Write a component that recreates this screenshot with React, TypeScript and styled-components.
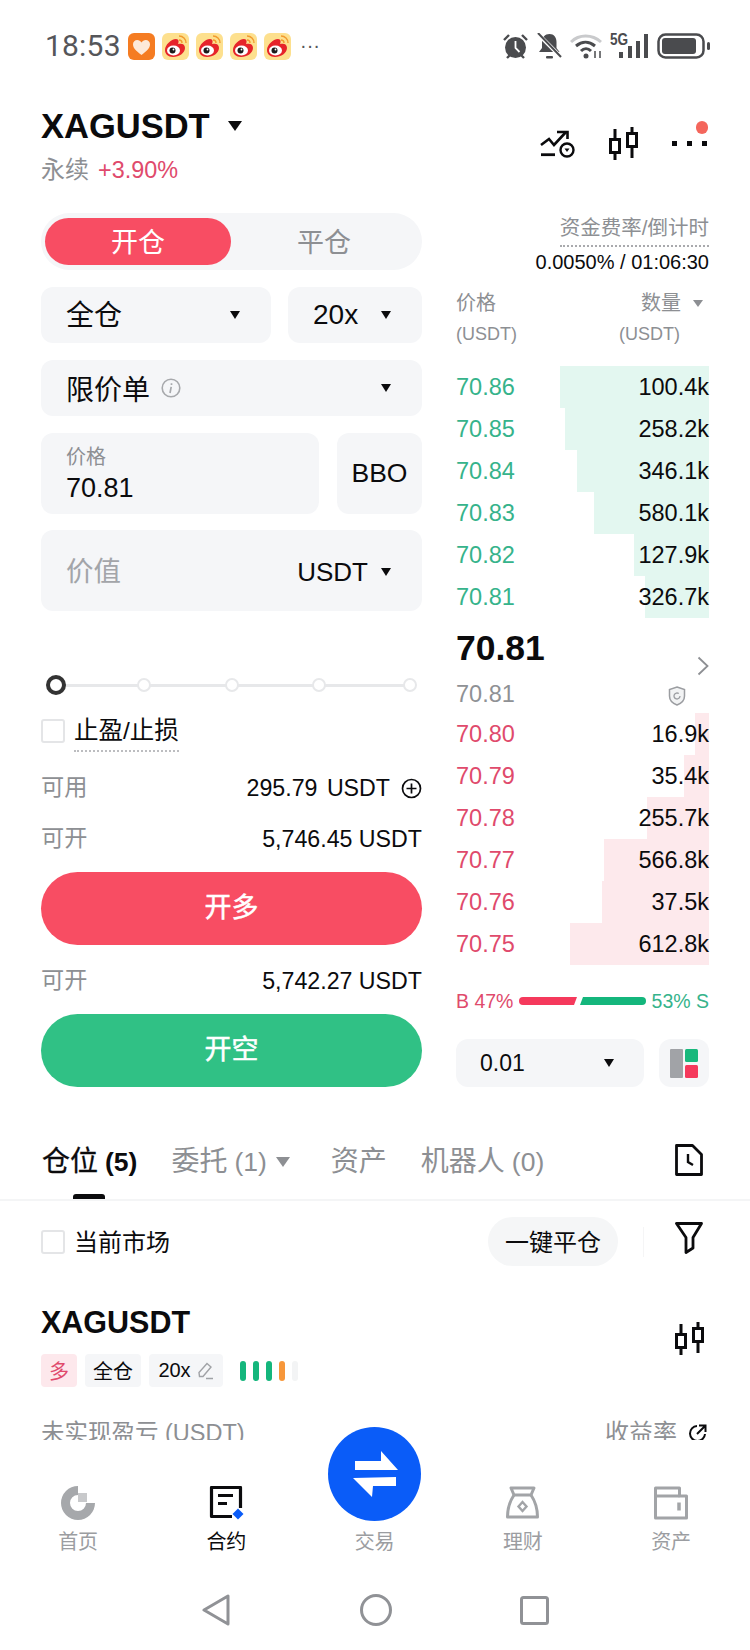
import React from "react";
import styled, { createGlobalStyle } from "styled-components";

const Global = createGlobalStyle`
  html, body { margin: 0; padding: 0; background: #fff; }
  body { font-family: "Liberation Sans", "Noto Sans CJK SC", sans-serif; color: #0b0b0d; }
  * { box-sizing: border-box; }
  svg { display: block; flex: none; }
`;

const RED = "#f84d63";
const GREEN = "#30c185";
const PANEL = "#f5f6f8";
const GRAY = "#8d8f93";
const PRICE_RED = "#e04a6c";
const PRICE_GREEN = "#36b38b";

const Screen = styled.div`
  width: 750px; height: 1650px; overflow: hidden; display: flex; flex-direction: column; background: #fff;
`;
const Content = styled.div`
  height: 1440px; overflow: hidden; flex: none;
`;

const StatusBar = styled.div`
  height: 92px; padding: 0 40px 0 45px; display: flex; align-items: center;
`;
const Clock = styled.span`
  font: 400 30px/1 Roboto, "Liberation Sans", sans-serif; color: #55565a; width: 74px; margin-right: 9px; letter-spacing: .2px;
`;
const AppIcons = styled.div`
  display: flex; gap: 7px; align-items: center;
`;
const MoreDots = styled.span`
  margin-left: 2px; font-size: 20px; line-height: 20px; height: 20px; color: #55565a; margin-bottom: 2px;
`;
const SysIcons = styled.div`
  margin-left: auto; display: flex; align-items: center;
`;
const SignalBox = styled.div`
  position: relative; width: 38px; height: 24px; margin: 0 9px 0 7px;
`;
const FiveG = styled.span`
  position: absolute; left: 0; top: -2px; font: 700 16px/1 "Liberation Sans", sans-serif; color: #4a4b4e; transform: scaleX(.85); transform-origin: left top;
`;

const Header = styled.div`
  padding: 0 42px 0 41px; display: flex; justify-content: space-between;
`;
const TitleRow = styled.div`
  height: 68px; display: flex; align-items: center; gap: 18px;
`;
const Title = styled.span`
  font-size: 34.5px; font-weight: 700; line-height: 1;
`;
const SubRow = styled.div`
  height: 24px; margin-top: -2px; display: flex; align-items: center; gap: 9px; font-size: 23.4px; line-height: 24px;
`;
const SubLabel = styled.span`
  color: ${GRAY}; font-size: 24px;
`;
const SubValue = styled.span`
  color: ${PRICE_RED};
`;
const HeaderIcons = styled.div`
  position: relative; display: flex; margin-top: 35px; height: 34px; align-items: flex-start;
`;
const IconGap = styled.span`
  width: 33px;
`;
const MenuDots = styled.div`
  width: 36px; height: 34px; margin-left: 33px; position: relative;
`;
const Notice = styled.span`
  position: absolute; right: 0; top: -6px; width: 12.500px; height: 12.500px; border-radius: 50%; background: #f4665c;
`;

const Triangle = styled.span<{ $w?: number; $h?: number; $c?: string }>`
  display: inline-block; flex: none; width: 0; height: 0;
  border-left: ${p => (p.$w ?? 10) / 2}px solid transparent;
  border-right: ${p => (p.$w ?? 10) / 2}px solid transparent;
  border-top: ${p => p.$h ?? 8}px solid ${p => p.$c ?? "#0b0b0d"};
`;

const Trade = styled.div`
  margin-top: 31px; padding: 0 40px 0 41px; display: flex; gap: 34px;
`;
const Left = styled.div`
  width: 381px; flex: none; display: flex; flex-direction: column;
`;
const Right = styled.div`
  width: 254px; flex: none; display: flex; flex-direction: column; padding-right: 1px;
`;

const Toggle = styled.div`
  height: 57px; background: ${PANEL}; border-radius: 29px; padding: 5px 4px; display: flex;
`;
const ToggleItem = styled.div<{ $on?: boolean }>`
  width: 186px; height: 47px; border-radius: 24px; display: flex; align-items: center; justify-content: center; font-size: 27px; padding-bottom: 2px;
  background: ${p => (p.$on ? RED : "transparent")}; color: ${p => (p.$on ? "#fff" : GRAY)};
`;
const FieldRow = styled.div<{ $gap?: number }>`
  display: flex; gap: ${p => p.$gap ?? 17}px; margin-top: 16.5px;
`;
const Field = styled.div<{ $w?: number; $h?: number }>`
  ${p => (p.$w ? `width:${p.$w}px;flex:none;` : "flex:1;")}
  height: ${p => p.$h ?? 56.5}px; background: ${PANEL}; border-radius: 12px; padding: 0 31px 0 25px; display: flex; align-items: center; justify-content: space-between;
  font-size: 28px;
`;
const CjkLabel = styled.span`
  margin-bottom: 3px;
`;
const LatinLabel = styled.span`
  margin-top: 1px;
`;
const CenterField = styled(Field)`
  padding: 0; justify-content: center; font-size: 26.5px;
`;
const NoGrow = styled.span`
  display: flex; align-items: center; gap: 11px;
`;
const PriceField = styled(Field)`
  flex-direction: column; align-items: flex-start; justify-content: flex-start; padding-top: 12px;
`;
const SmallLabel = styled.span`
  font-size: 20px; line-height: 24px; color: ${GRAY};
`;
const BigVal = styled.span`
  font-size: 27px; line-height: 32px; margin-top: 3px;
`;
const Placeholder = styled.span`
  color: #a3a5a9; font-size: 27.500px; margin-bottom: 3px;
`;
const UnitPick = styled.span`
  display: flex; align-items: center; gap: 13px; font-size: 26px; margin-top: 3px;
`;

const Slider = styled.div`
  position: relative; height: 20px; margin: 64px 0 0 5px; width: 372px; display: flex; align-items: center;
`;
const Track = styled.div`
  position: absolute; left: 10px; right: 7px; top: 9px; height: 3px; background: #e7e8ea;
`;
const Knob = styled.div`
  position: relative; width: 20px; height: 20px; border-radius: 50%; border: 4px solid #333; background: #fff;
`;
const Dot = styled.div<{ $ml: number }>`
  position: relative; width: 14px; height: 14px; border-radius: 50%; border: 2px solid #e7e8ea; background: #fff; margin-left: ${p => p.$ml}px;
`;

const TpRow = styled.div`
  display: flex; gap: 9px; margin-top: 24px; height: 33px;
`;
const Check = styled.span`
  width: 24px; height: 24px; flex: none; border: 2px solid #e4e5e7; border-radius: 3px; background: #fff;
`;
const TpLabel = styled.span`
  font-size: 24.500px; line-height: 24px; height: 33px; padding-bottom: 7px; border-bottom: 2px dotted #bcbdc0;
`;
const InfoRow = styled.div<{ $mt: number }>`
  height: 30px; margin-top: ${p => p.$mt}px; display: flex; align-items: center; justify-content: space-between; font-size: 23.200px;
`;
const InfoKey = styled.span`
  color: ${GRAY}; margin-bottom: 5px;
`;
const InfoVal = styled.span<{ $wide?: boolean }>`
  display: flex; align-items: center; gap: 11px; white-space: pre; margin-top: 2px; ${p => p.$wide && "word-spacing: 3px;"}
`;
const Action = styled.div<{ $c: string; $mt: number }>`
  height: 73px; margin-top: ${p => p.$mt}px; border-radius: 37px; background: ${p => p.$c}; color: #fff; display: flex; align-items: center; justify-content: center; font-size: 27px; padding-bottom: 6px;
  -webkit-text-stroke: .5px #fff;
`;

const FundBlock = styled.div`
  display: flex; flex-direction: column; align-items: flex-end;
`;
const FundLabel = styled.span`
  font-size: 20.5px; line-height: 28px; margin-top: 1px; padding-bottom: 3px; border-bottom: 2px dotted #a9aaad; color: ${GRAY};
  white-space: nowrap;
`;
const FundVal = styled.span`
  font-size: 20px; line-height: 24px; margin-top: 3px; white-space: pre;
`;
const BookHead = styled.div`
  margin-top: 14px; height: 58px; display: grid; grid-template-columns: 1fr 1fr; color: ${GRAY};
`;
const HeadCell = styled.span<{ $right?: boolean; $small?: boolean }>`
  font-size: ${p => (p.$small ? 18 : 20)}px; line-height: ${p => (p.$small ? 24 : 30)}px; ${p => p.$small && "margin-top:4px;"}
  display: flex; align-items: center; gap: 12px;
  ${p => p.$right && "justify-self:end;padding-right:6px;"}
`;
const HeadCellEnd = styled.span`
  font-size: 18px; line-height: 24px; margin-top: 4px; padding-right: 29px; text-align: right;
`;
const Asks = styled.div`
  margin-top: 20px;
`;
const Row = styled.div`
  position: relative; height: 42px; display: flex; align-items: center; justify-content: space-between; font-size: 23.5px;
`;
const Depth = styled.span<{ $c: string }>`
  position: absolute; top: 0; bottom: 0; right: 0; background: ${p => p.$c};
`;
const RowPrice = styled.span<{ $c: string }>`
  position: relative; color: ${p => p.$c};
`;
const RowQty = styled.span`
  position: relative;
`;
const Mid = styled.div`
  height: 95px; display: flex; flex-direction: column;
`;
const MidTop = styled.div`
  height: 60px; display: flex; justify-content: space-between;
`;
const MidPrice = styled.span`
  font-size: 35.500px; font-weight: 700; line-height: 60px;
`;
const ChevronWrap = styled.span`
  margin: 38px 0 0 0;
`;
const MidBottom = styled.div`
  height: 32px; display: flex; justify-content: space-between; align-items: center; color: #8f9195; font-size: 23.5px;
`;
const ShieldWrap = styled.span`
  margin-right: 23px; margin-top: 4px;
`;
const Ratio = styled.div`
  margin-top: 25px; height: 22px; display: flex; align-items: center; font-size: 19.5px; justify-content: space-between;
`;
const RatioText = styled.span<{ $c: string }>`
  color: ${p => p.$c}; white-space: pre;
`;
const RatioBars = styled.span`
  display: flex; gap: 3px;
`;
const RatioBar = styled.span<{ $w: number; $c: string; $side: "l" | "r" }>`
  width: ${p => p.$w}px; height: 8px; background: ${p => p.$c};
  ${p => p.$side === "l"
    ? "border-radius:4px 0 0 4px;clip-path:polygon(0 0,100% 0,calc(100% - 3px) 100%,0 100%);"
    : "border-radius:0 4px 4px 0;clip-path:polygon(3px 0,100% 0,100% 100%,0 100%);"}
`;
const BookFoot = styled.div`
  margin-top: 27px; display: flex; justify-content: space-between;
`;
const StepBox = styled.div`
  width: 188px; height: 48px; background: ${PANEL}; border-radius: 12px; padding: 0 30px 0 24px; display: flex; align-items: center; justify-content: space-between; font-size: 23px;
`;
const LayoutBox = styled.div`
  width: 50px; height: 48px; background: ${PANEL}; border-radius: 12px; display: flex; align-items: center; justify-content: center;
`;

const Tabs = styled.div`
  margin-top: 43px; height: 71px; border-bottom: 2px solid #f4f5f6; padding: 15px 47px 0 42px; display: flex; position: relative;
`;
const Tab = styled.span<{ $on?: boolean; $ml: number }>`
  margin-left: ${p => p.$ml}px; height: 34px; display: flex; align-items: center; font-size: 28px; line-height: 34px; gap: 7px; color: ${p => (p.$on ? "#0b0b0d" : GRAY)};
  ${p => p.$on && "-webkit-text-stroke: .3px #0b0b0d;"}
`;
const TabCount = styled.span<{ $on?: boolean }>`
  font-size: 26.500px; font-weight: ${p => (p.$on ? 700 : 400)}; -webkit-text-stroke: 0;
`;
const TabLine = styled.span`
  position: absolute; left: 73px; bottom: 0; width: 32px; height: 5px; background: #0b0b0d; border-radius: 3px 3px 0 0;
`;
const TabIcon = styled.span`
  margin-left: auto; margin-top: -1px;
`;
const TabTri = styled.span`
  margin-left: 2px; display: flex;
`;
const FilterRow = styled.div`
  margin-top: 16px; height: 49px; padding: 0 47px 0 41px; display: flex; align-items: center;
`;
const FilterLabel = styled.span`
  font-size: 24px; margin-left: 9px; margin-bottom: 2px;
`;
const CloseAll = styled.span`
  margin-left: auto; width: 130px; height: 49px; border-radius: 25px; background: #f5f6f7; display: flex; align-items: center; justify-content: center; font-size: 24px; padding-bottom: 2px;
`;
const VBar = styled.span`
  width: 1px; height: 30px; background: #f5f5f6; margin: 0 31px 0 25px;
`;
const FilterIconWrap = styled.span`
  margin-bottom: 7px;
`;
const PosHead = styled.div`
  margin-top: 38px; padding: 0 45px 0 41px; display: flex; justify-content: space-between;
`;
const PosName = styled.div`
  font-size: 30.500px; font-weight: 700; line-height: 36px;
`;
const Tags = styled.div`
  margin-top: 14px; display: flex; align-items: center; gap: 8px;
`;
const Tag = styled.span<{ $w: number; $pink?: boolean }>`
  width: ${p => p.$w}px; height: 33px; border-radius: 4px; display: flex; align-items: center; justify-content: center; gap: 6px; font-size: 20px;
  background: ${p => (p.$pink ? "#fde8ec" : PANEL)}; color: ${p => (p.$pink ? PRICE_RED : "#0b0b0d")};
`;
const Lights = styled.span`
  margin-left: 9px; display: flex; gap: 7px;
`;
const Light = styled.span<{ $c: string }>`
  width: 6px; height: 20px; border-radius: 3px; background: ${p => p.$c};
`;
const CandleWrap = styled.span`
  margin-top: 18px;
`;
const PnlRow = styled.div`
  margin-top: 32px; height: 28px; padding: 0 42px 0 41px; display: flex; justify-content: space-between; align-items: center; font-size: 23.5px; color: ${GRAY}; line-height: 28px;
`;
const PnlRight = styled.span`
  display: flex; align-items: center; gap: 11px; font-size: 24px;
`;

const Nav = styled.div`
  position: relative; height: 130px; flex: none; background: #fff; display: grid; grid-template-columns: repeat(5, 148.25px); padding: 46px 0 0 4px;
`;
const NavItem = styled.div<{ $on?: boolean }>`
  display: flex; flex-direction: column; align-items: center; color: ${p => (p.$on ? "#0b0b0d" : "#9b9da1")}; font-size: 20px;
`;
const NavIcon = styled.span`
  height: 34px; width: 36px; display: flex; justify-content: center;
`;
const NavLabel = styled.span`
  margin-top: 7px; line-height: 30px;
`;
const Fab = styled.div`
  position: absolute; left: 328px; top: -13px; width: 93px; height: 94px; border-radius: 50%; background: #0a5cf8; display: flex; align-items: center; justify-content: center;
`;
const SysNav = styled.div`
  flex: 1; display: flex; align-items: center;
`;
const SysSlot = styled.span<{ $ml: number }>`
  margin-left: ${p => p.$ml}px;
`;

const Weibo = () => (
  <svg width="27" height="27" viewBox="0 0 27 27">
    <rect width="27" height="27" rx="6" fill="#fde08e" />
    <path d="M3 17c0-5 6-11 11-11 3 0 3 3 2 5 4-1 7 0 7 4 0 5-6 9-12 9-5 0-8-3-8-7z" fill="#e6242a" />
    <ellipse cx="11.5" cy="17.5" rx="6.5" ry="5" fill="#fff" />
    <circle cx="10.5" cy="17.5" r="3" fill="#1b1b1b" />
    <circle cx="11.5" cy="16.5" r=".9" fill="#fff" />
    <path d="M17 3c4 0 7 3 7 7M17 7c2 0 3 1 3 3" stroke="#f29a2e" strokeWidth="1.4" fill="none" />
  </svg>
);
const Heart = () => (
  <svg width="27" height="27" viewBox="0 0 27 27">
    <rect width="27" height="27" rx="6" fill="#f57c22" />
    <path d="M13.5 22C8 18 5 15 5 11.3 5 8.7 7 7 9.2 7c1.8 0 3.3 1 4.3 2.5C14.5 8 16 7 17.8 7 20 7 22 8.7 22 11.3 22 15 19 18 13.5 22z" fill="#fde9d8" />
  </svg>
);
const Alarm = () => (
  <svg width="27" height="27" viewBox="0 0 27 27" style={{ marginRight: 8 }}>
    <circle cx="13.5" cy="14.5" r="10.5" fill="#4a4b4e" />
    <path d="M2 7l5-5M25 7l-5-5M5 25l3-3M22 25l-3-3" stroke="#4a4b4e" strokeWidth="2.4" />
    <path d="M13.5 8v7l4 4" stroke="#fff" strokeWidth="1.8" fill="none" />
  </svg>
);
const Bell = () => (
  <svg width="25" height="27" viewBox="0 0 25 27" style={{ marginRight: 8 }}>
    <path d="M12.5 1c4.5 0 7 3.5 7 8v6l3 4H2l3-4V9c0-4.500 3-8 7.500-8z" fill="#4a4b4e" />
    <rect x="9" y="23" width="7" height="2.500" rx="1" fill="#4a4b4e" />
    <path d="M1 1l23 23" stroke="#fff" strokeWidth="4" />
    <path d="M1 0l23 24" stroke="#4a4b4e" strokeWidth="2" />
  </svg>
);
const Wifi = () => (
  <svg width="33" height="26" viewBox="0 0 33 26">
    <path d="M1 9C9 1 22 1 31 9" stroke="#c9cacc" strokeWidth="3" fill="none" />
    <path d="M6 13c6-5 13-5 19 0M11 18c3-3 7-3 10 0" stroke="#4a4b4e" strokeWidth="3" fill="none" />
    <circle cx="16" cy="23" r="2.500" fill="#4a4b4e" />
    <path d="M25 18v7M30 18v7" stroke="#4a4b4e" strokeWidth="1.500" />
  </svg>
);
const Signal = () => (
  <svg width="38" height="24" viewBox="0 0 38 24">
    <rect x="9" y="18" width="4" height="6" fill="#4a4b4e" />
    <rect x="18" y="12" width="4" height="12" fill="#4a4b4e" />
    <rect x="26" y="7" width="4" height="17" fill="#4a4b4e" />
    <rect x="34" y="0" width="4" height="24" fill="#4a4b4e" />
  </svg>
);
const Battery = () => (
  <svg width="53" height="26" viewBox="0 0 53 26">
    <rect x="1.500" y="1.500" width="45" height="23" rx="7" fill="none" stroke="#4a4b4e" strokeWidth="2.500" />
    <rect x="5" y="5" width="34" height="16" rx="3" fill="#4a4b4e" />
    <rect x="50" y="9" width="3" height="8" rx="1.500" fill="#4a4b4e" />
  </svg>
);

const RouteIcon = () => (
  <svg width="36" height="28" viewBox="0 0 36 28" style={{ marginTop: 3 }}>
    <path d="M1 15l8-6 5 6L26 2" fill="none" stroke="#0b0b0d" strokeWidth="2.600" />
    <path d="M17 2h10.500v7" fill="none" stroke="#0b0b0d" strokeWidth="2.600" />
    <path d="M1 24.700h14" stroke="#0b0b0d" strokeWidth="2.800" />
    <circle cx="27" cy="20" r="6.500" fill="#fff" stroke="#0b0b0d" strokeWidth="2.400" />
    <path d="M24.500 18.500h5L27 22z" fill="#0b0b0d" />
  </svg>
);
const Candle = () => (
  <svg width="30" height="34" viewBox="0 0 30 34">
    <path d="M6 2v31M23 0v31" stroke="#0b0b0d" strokeWidth="3" />
    <rect x="1.500" y="12.500" width="9" height="13" fill="#fff" stroke="#0b0b0d" strokeWidth="3" />
    <rect x="18.500" y="6.500" width="9" height="13" fill="#fff" stroke="#0b0b0d" strokeWidth="3" />
  </svg>
);
const Dots3 = () => (
  <svg width="36" height="34" viewBox="0 0 36 34">
    <rect x="0" y="14" width="5" height="5" fill="#0b0b0d" />
    <rect x="15" y="14" width="5" height="5" fill="#0b0b0d" />
    <rect x="30" y="14" width="5" height="5" fill="#0b0b0d" />
  </svg>
);
const Info = () => (
  <svg width="20" height="20" viewBox="0 0 20 20">
    <circle cx="10" cy="10" r="8.800" fill="none" stroke="#a7a9ac" strokeWidth="1.600" />
    <path d="M10.500 5.200v1.800M10.200 8.800L9 15" stroke="#a7a9ac" strokeWidth="1.700" fill="none" />
  </svg>
);
const PlusCircle = () => (
  <svg width="21" height="21" viewBox="0 0 21 21">
    <circle cx="10.500" cy="10.500" r="9" fill="none" stroke="#0b0b0d" strokeWidth="1.700" />
    <path d="M10.500 5.500v10M5.500 10.500h10" stroke="#0b0b0d" strokeWidth="1.700" />
  </svg>
);
const Chevron = () => (
  <svg width="12" height="20" viewBox="0 0 12 20">
    <path d="M1.500 1.500L10.500 10l-9 8.500" fill="none" stroke="#8d8f93" strokeWidth="1.800" />
  </svg>
);
const Shield = () => (
  <svg width="18" height="20" viewBox="0 0 18 20">
    <path d="M9 1l7.500 2.500V10c0 4.500-3.500 7.500-7.500 9-4-1.500-7.500-4.500-7.500-9V3.500z" fill="#f2f3f4" stroke="#9b9da1" strokeWidth="1.500" />
    <path d="M12 10a3 3 0 1 1-1.200-2.400" fill="none" stroke="#9b9da1" strokeWidth="1.300" />
  </svg>
);
const LayoutGlyph = () => (
  <svg width="28" height="29" viewBox="0 0 28 29">
    <rect x="0" y="0" width="13" height="29" rx="1" fill="#a1a3a7" />
    <rect x="15" y="0" width="13" height="13" rx="1.500" fill="#18b87c" />
    <rect x="15" y="16" width="13" height="13" rx="1.500" fill="#f5395c" />
  </svg>
);
const DocClock = () => (
  <svg width="28" height="32" viewBox="0 0 28 32">
    <path d="M1.500 1.500h16l9 9v20h-25z" fill="none" stroke="#0b0b0d" strokeWidth="2.800" strokeLinejoin="round" />
    <path d="M13 10v8l5 3" fill="none" stroke="#0b0b0d" strokeWidth="2.400" />
  </svg>
);
const Filter = () => (
  <svg width="28" height="32" viewBox="0 0 28 32">
    <path d="M1.500 1.500h25L18 15.500V26l-7 4.500V15.500z" fill="none" stroke="#0b0b0d" strokeWidth="2.800" strokeLinejoin="round" />
  </svg>
);
const Pencil = () => (
  <svg width="17" height="18" viewBox="0 0 17 18">
    <path d="M10 1.500l4 3.500-8 9.500H2.500L2 10.500zM9 16.500h7" fill="none" stroke="#a0a2a6" strokeWidth="1.400" />
  </svg>
);
const Share = () => (
  <svg width="20" height="20" viewBox="0 0 20 20">
    <path d="M9 3a7.500 7.500 0 1 0 8 8" fill="none" stroke="#0b0b0d" strokeWidth="2" />
    <path d="M9 11l8-8M11 2.500h6.500V9" fill="none" stroke="#0b0b0d" strokeWidth="2" />
  </svg>
);
const HomeIcon = () => (
  <svg width="34" height="34" viewBox="0 0 34 34">
    <path d="M17 0A17 17 0 1 0 34 17H25A8 8 0 1 1 17 9Z" fill="#a6a8ab" />
    <rect x="17" y="7" width="9" height="9" fill="#c8c9cb" />
  </svg>
);
const ContractIcon = () => (
  <svg width="36" height="34" viewBox="0 0 36 34">
    <path d="M32.500 22V1.500H3.500V30.500H24" fill="none" stroke="#0b0b0d" strokeWidth="3.200" strokeLinejoin="round" />
    <path d="M10 9.500H25M10 17.500H19" stroke="#0b0b0d" strokeWidth="3.200" />
    <path d="M30 22.500l5.500 5.500-5.500 5.500-5.500-5.500z" fill="#0a5cf8" />
  </svg>
);
const SwapIcon = () => (
  <svg width="46" height="48" viewBox="0 0 46 48">
    <path d="M3 11h26V1l17 19H3z" fill="#fff" />
    <path d="M44 27v9H21l-1 11L1 28z" fill="#fff" />
  </svg>
);
const BagIcon = () => (
  <svg width="33" height="34" viewBox="0 0 33 34">
    <path d="M5 2h23l-3 7H8z" fill="none" stroke="#a2a4a7" strokeWidth="3" strokeLinejoin="round" />
    <path d="M8 9C4 15 1.500 23 1.500 31H31.500C31.500 23 29 15 25 9" fill="none" stroke="#a2a4a7" strokeWidth="3" strokeLinejoin="round" />
    <path d="M16.500 16l4 4.500-4 4.500-4-4.500z" fill="none" stroke="#a2a4a7" strokeWidth="2.400" />
  </svg>
);
const WalletIcon = () => (
  <svg width="34" height="34" viewBox="0 0 34 34">
    <path d="M1.500 2H25.500V10H32.500V32H1.500Z" fill="none" stroke="#a2a4a7" strokeWidth="3" strokeLinejoin="round" />
    <path d="M1.500 10H25.500" stroke="#a2a4a7" strokeWidth="3" />
    <path d="M25 16.500v8" stroke="#a2a4a7" strokeWidth="3.500" />
  </svg>
);
const BackIcon = () => (
  <svg width="28" height="32" viewBox="0 0 28 32">
    <path d="M26 2v28L2 16z" fill="none" stroke="#909296" strokeWidth="3" strokeLinejoin="round" />
  </svg>
);
const HomeSys = () => (
  <svg width="32" height="32" viewBox="0 0 32 32">
    <circle cx="16" cy="16" r="14.500" fill="none" stroke="#909296" strokeWidth="3" />
  </svg>
);
const RecentSys = () => (
  <svg width="29" height="29" viewBox="0 0 29 29">
    <rect x="1.500" y="1.500" width="26" height="26" rx="2" fill="none" stroke="#909296" strokeWidth="3" />
  </svg>
);

const asks = [
  { p: "70.86", q: "100.4k", l: 560 }, { p: "70.85", q: "258.2k", l: 565 }, { p: "70.84", q: "346.1k", l: 577 },
  { p: "70.83", q: "580.1k", l: 594 }, { p: "70.82", q: "127.9k", l: 634 }, { p: "70.81", q: "326.7k", l: 645 },
];
const bids = [
  { p: "70.80", q: "16.9k", l: 695 }, { p: "70.79", q: "35.4k", l: 684 }, { p: "70.78", q: "255.7k", l: 647 },
  { p: "70.77", q: "566.8k", l: 604 }, { p: "70.76", q: "37.5k", l: 602 }, { p: "70.75", q: "612.8k", l: 570 },
];
const BOOK_RIGHT = 709;

export default function App() {
  return (
    <Screen>
      <Global />
      <Content>
        <StatusBar>
          <Clock>18:53</Clock>
          <AppIcons>
            <Heart /><Weibo /><Weibo /><Weibo /><Weibo />
            <MoreDots>···</MoreDots>
          </AppIcons>
          <SysIcons>
            <Alarm /><Bell /><Wifi />
            <SignalBox><FiveG>5G</FiveG><Signal /></SignalBox>
            <Battery />
          </SysIcons>
        </StatusBar>

        <Header>
          <div>
            <TitleRow><Title>XAGUSDT</Title><Triangle $w={14} $h={10} /></TitleRow>
            <SubRow><SubLabel>永续</SubLabel><SubValue>+3.90%</SubValue></SubRow>
          </div>
          <HeaderIcons>
            <RouteIcon />
            <IconGap />
            <Candle />
            <MenuDots><Dots3 /><Notice /></MenuDots>
          </HeaderIcons>
        </Header>

        <Trade>
          <Left>
            <Toggle>
              <ToggleItem $on>开仓</ToggleItem>
              <ToggleItem>平仓</ToggleItem>
            </Toggle>
            <FieldRow>
              <Field $w={230}><CjkLabel>全仓</CjkLabel><Triangle /></Field>
              <Field $w={134}><LatinLabel>20x</LatinLabel><Triangle /></Field>
            </FieldRow>
            <FieldRow>
              <Field><NoGrow>限价单<Info /></NoGrow><Triangle /></Field>
            </FieldRow>
            <FieldRow $gap={18}>
              <PriceField $w={278} $h={81}>
                <SmallLabel>价格</SmallLabel>
                <BigVal>70.81</BigVal>
              </PriceField>
              <CenterField $w={85} $h={81}>BBO</CenterField>
            </FieldRow>
            <FieldRow>
              <Field $h={81}><Placeholder>价值</Placeholder><UnitPick>USDT<Triangle /></UnitPick></Field>
            </FieldRow>

            <Slider>
              <Track />
              <Knob />
              <Dot $ml={71} />
              <Dot $ml={74} />
              <Dot $ml={73} />
              <Dot $ml={77} />
            </Slider>

            <TpRow>
              <Check />
              <TpLabel>止盈/止损</TpLabel>
            </TpRow>

            <InfoRow $mt={20}>
              <InfoKey>可用</InfoKey>
              <InfoVal $wide>295.79 USDT<PlusCircle /></InfoVal>
            </InfoRow>
            <InfoRow $mt={21}>
              <InfoKey>可开</InfoKey>
              <InfoVal>5,746.45 USDT</InfoVal>
            </InfoRow>
            <Action $c={RED} $mt={19}>开多</Action>
            <InfoRow $mt={20}>
              <InfoKey>可开</InfoKey>
              <InfoVal>5,742.27 USDT</InfoVal>
            </InfoRow>
            <Action $c={GREEN} $mt={19}>开空</Action>
          </Left>

          <Right>
            <FundBlock>
              <FundLabel>资金费率/倒计时</FundLabel>
              <FundVal>0.0050% / 01:06:30</FundVal>
            </FundBlock>
            <BookHead>
              <HeadCell>价格</HeadCell>
              <HeadCell $right>数量<Triangle $w={11} $h={7} $c="#8d8f93" /></HeadCell>
              <HeadCell $small>(USDT)</HeadCell>
              <HeadCellEnd>(USDT)</HeadCellEnd>
            </BookHead>
            <Asks>
              {asks.map(r => (
                <Row key={r.p}>
                  <Depth $c="#e3f7f0" style={{ width: BOOK_RIGHT - r.l }} />
                  <RowPrice $c={PRICE_GREEN}>{r.p}</RowPrice>
                  <RowQty>{r.q}</RowQty>
                </Row>
              ))}
            </Asks>
            <Mid>
              <MidTop>
                <MidPrice>70.81</MidPrice>
                <ChevronWrap><Chevron /></ChevronWrap>
              </MidTop>
              <MidBottom>
                <span>70.81</span>
                <ShieldWrap><Shield /></ShieldWrap>
              </MidBottom>
            </Mid>
            {bids.map(r => (
              <Row key={r.p}>
                <Depth $c="#fde9ec" style={{ width: BOOK_RIGHT - r.l }} />
                <RowPrice $c={PRICE_RED}>{r.p}</RowPrice>
                <RowQty>{r.q}</RowQty>
              </Row>
            ))}
            <Ratio>
              <RatioText $c={PRICE_RED}>B 47%</RatioText>
              <RatioBars>
                <RatioBar $w={58} $c="#f5395c" $side="l" />
                <RatioBar $w={66} $c="#14b67c" $side="r" />
              </RatioBars>
              <RatioText $c={PRICE_GREEN}>53% S</RatioText>
            </Ratio>
            <BookFoot>
              <StepBox>0.01<Triangle /></StepBox>
              <LayoutBox><LayoutGlyph /></LayoutBox>
            </BookFoot>
          </Right>
        </Trade>

        <Tabs>
          <Tab $on $ml={0}>仓位<TabCount $on>(5)</TabCount></Tab>
          <Tab $ml={34}>委托<TabCount>(1)</TabCount><TabTri><Triangle $w={14} $h={10} $c="#8d8f93" /></TabTri></Tab>
          <Tab $ml={41}>资产</Tab>
          <Tab $ml={34}>机器人<TabCount>(0)</TabCount></Tab>
          <TabIcon><DocClock /></TabIcon>
          <TabLine />
        </Tabs>
        <FilterRow>
          <Check />
          <FilterLabel>当前市场</FilterLabel>
          <CloseAll>一键平仓</CloseAll>
          <VBar />
          <FilterIconWrap><Filter /></FilterIconWrap>
        </FilterRow>
        <PosHead>
          <div>
            <PosName>XAGUSDT</PosName>
            <Tags>
              <Tag $w={36} $pink>多</Tag>
              <Tag $w={56}>全仓</Tag>
              <Tag $w={74}>20x<Pencil /></Tag>
              <Lights>
                <Light $c="#14b67c" /><Light $c="#14b67c" /><Light $c="#14b67c" /><Light $c="#f7973a" /><Light $c="#f3f4f5" />
              </Lights>
            </Tags>
          </div>
          <CandleWrap><Candle /></CandleWrap>
        </PosHead>
        <PnlRow>
          <span>未实现盈亏 (USDT)</span>
          <PnlRight>收益率<Share /></PnlRight>
        </PnlRow>
      </Content>

      <Nav>
        <NavItem><NavIcon><HomeIcon /></NavIcon><NavLabel>首页</NavLabel></NavItem>
        <NavItem $on><NavIcon><ContractIcon /></NavIcon><NavLabel>合约</NavLabel></NavItem>
        <NavItem><NavIcon /><NavLabel>交易</NavLabel></NavItem>
        <NavItem><NavIcon><BagIcon /></NavIcon><NavLabel>理财</NavLabel></NavItem>
        <NavItem><NavIcon><WalletIcon /></NavIcon><NavLabel>资产</NavLabel></NavItem>
        <Fab><SwapIcon /></Fab>
      </Nav>
      <SysNav>
        <SysSlot $ml={202}><BackIcon /></SysSlot>
        <SysSlot $ml={130}><HomeSys /></SysSlot>
        <SysSlot $ml={128}><RecentSys /></SysSlot>
      </SysNav>
    </Screen>
  );
}
